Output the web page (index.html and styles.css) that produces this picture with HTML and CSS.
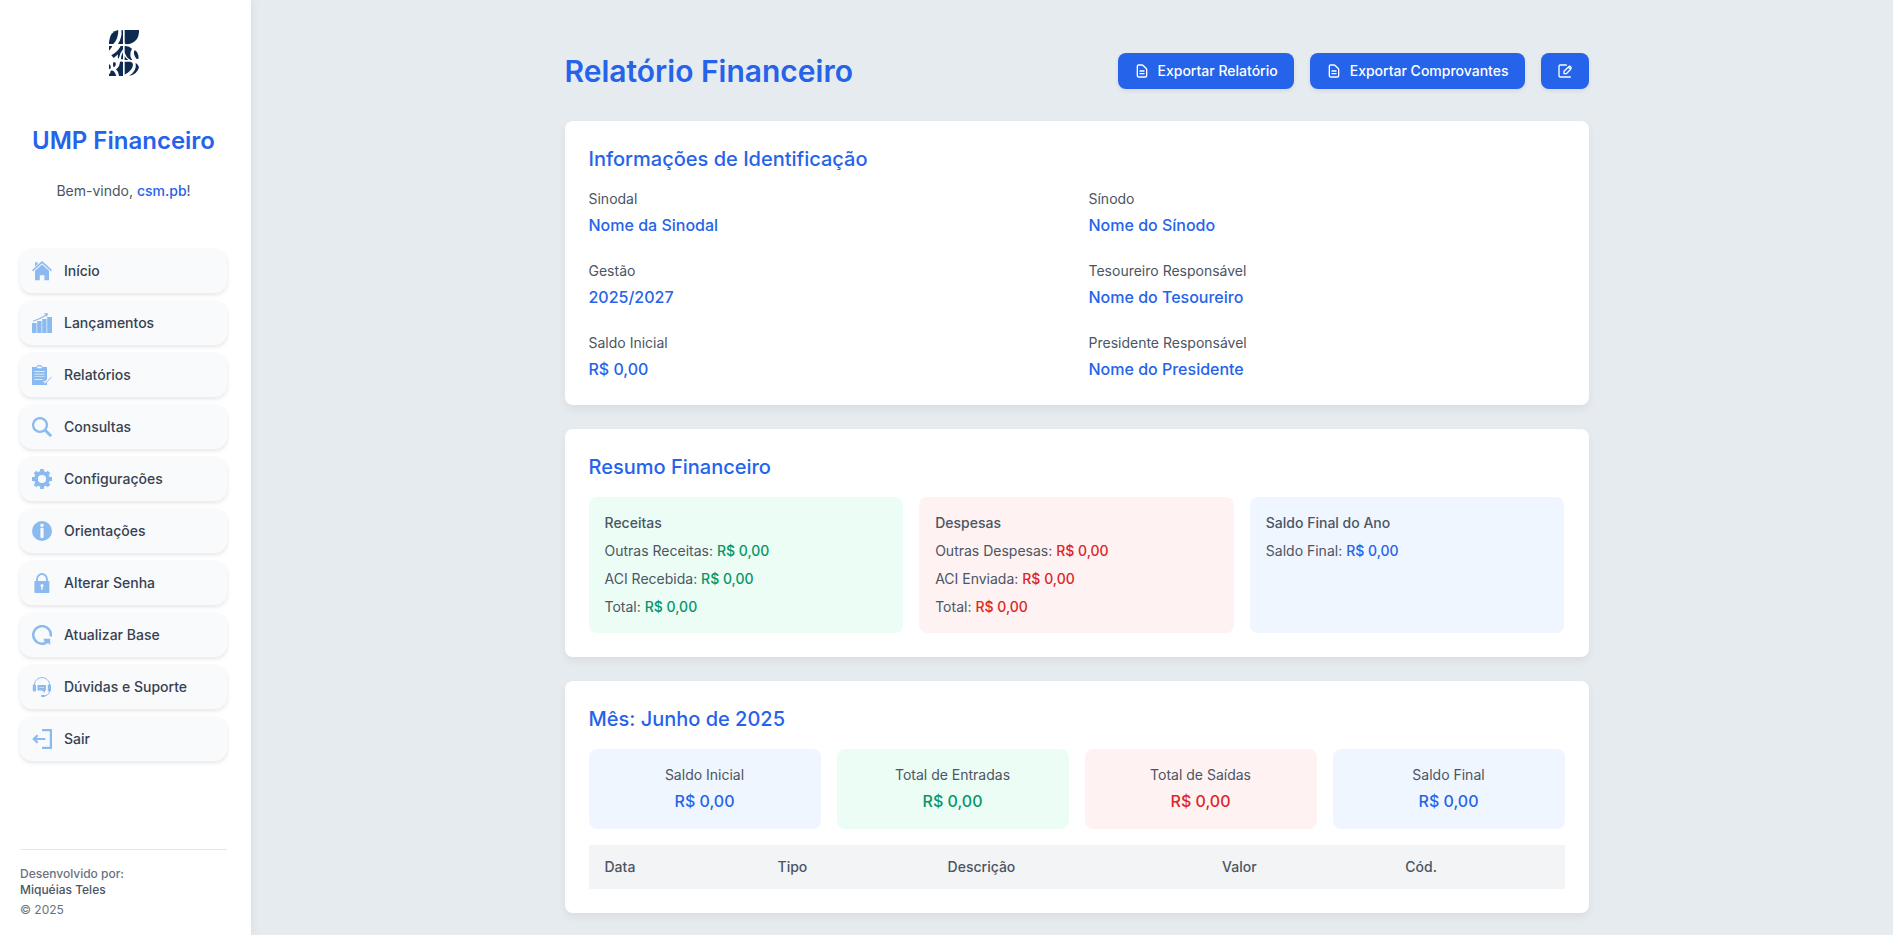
FILE: index.html
```html
<!DOCTYPE html>
<html lang="pt-BR">
<head>
<meta charset="utf-8">
<meta name="viewport" content="width=device-width, initial-scale=1">
<title>UMP Financeiro - Relatório Financeiro</title>
<link rel="stylesheet" href="styles.css">
</head>
<body>
<div class="layout">
  <aside class="sidebar">
    <svg class="logo" viewBox="0 0 90 138" fill="#0f2a50" role="img" aria-label="UMP">
      <path d="M0 42V36Q3 4 28 0Q28 27 13 42Z"/>
      <path d="M37 1H42V42H27Q40 22 37 1Z"/>
      <path d="M47 0H90Q91 40 51 43L47 40Z"/>
      <path d="M0 48H10Q7 56 0 62Z"/>
      <path d="M7 76Q26 66 35 48H42V58Q33 68 29 86Q25 84 27 73Q20 79 14 84Z"/>
      <path d="M42 67V88H36Q36 76 42 67Z"/>
      <path d="M47 48Q60 47 69 56Q63 65 64 77Q65 84 70 90H65Q50 82 47 66Z"/>
      <path d="M47 78Q51 86 58 90H47Z"/>
      <path d="M76 61Q72 75 83 87Q88 88 89 84Q89 75 84 66Q80 61 76 61Z"/>
      <path d="M0 102Q8 107 4 116L0 118Z"/>
      <path d="M5 122Q16 118 22 138H0V133Q5 129 5 122Z"/>
      <path d="M13 97H19Q23 106 15 112Q10 108 13 97Z"/>
      <path d="M33 95Q39 93 42 96V138H30Q30 126 21 118Q32 111 33 95Z"/>
      <path d="M47 95H65Q71 97 72 103Q71 117 58 127Q52 131 47 134Z"/>
      <path d="M80 98Q88 104 90 112Q86 132 60 138Q84 123 80 98Z"/>
    </svg>
    <h2 class="brand">UMP Financeiro</h2>
    <p class="welcome">Bem-vindo, <strong>csm.pb</strong>!</p>
    <nav class="menu" aria-label="Menu principal">
      <a class="menu-item" href="#"><svg class="menu-icon" viewBox="0 0 20 20" fill="currentColor"><path d="M3 1.300h2.600v2L3 5.500z"/><path d="M10 0L20 9l-1 1.200L10 2.200 1 10.200 0 9z"/><path d="M10 3.600L17 9.800V19.200h-4.600v-5H7.800v5H3V9.800z"/></svg><span>Início</span></a>
      <a class="menu-item" href="#"><svg class="menu-icon" viewBox="0 0 20 20" fill="currentColor"><path d="M0 10h4.600v10H0zM5.200 8h4.400v12H5.200zM10.200 6h4.400v14h-4.400zM15.200 4H20v16h-4.800z"/><path d="M1 8.200Q8 6 13.500 2.500" fill="none" stroke="currentColor" stroke-width="1.100"/><path d="M12 .3L16.200.2 14.800 4z"/></svg><span>Lançamentos</span></a>
      <a class="menu-item" href="#"><svg class="menu-icon" viewBox="0 0 20 20" fill="currentColor"><path fill-rule="evenodd" d="M0 2h4l1.500-1.500Q7.500-.8 9.500.5L11 2h4v12.200l-2.200 2.300-1-1-1.200 1L13 19l2-1.500V20H0zM5 2v1.200h5V2Q7.500.4 5 2zM2.300 6v.7h10.400V6zm0 2.700v.7h10.400v-.7zm0 2.700v.7h10.400v-.7zm0 2.700v.7h8v-.7z"/><path d="M11.300 15.800l2 2 5.800-6 .8.800-6.600 6.700-2.800-2.600z" opacity=".65"/></svg><span>Relatórios</span></a>
      <a class="menu-item" href="#"><svg class="menu-icon" viewBox="0 0 20 20" fill="none" stroke="currentColor"><circle cx="8" cy="8" r="6.900" stroke-width="2.300"/><path d="M13.200 13.200l6 6" stroke-width="2.900"/></svg><span>Consultas</span></a>
      <a class="menu-item" href="#"><svg class="menu-icon" viewBox="0 0 20 20"><circle cx="10" cy="10" r="6" fill="none" stroke="currentColor" stroke-width="3.800"/><path d="M10 0v4M10 16v4M0 10h4M16 10h4M3 3l2.800 2.800M14.200 14.200L17 17M3 17l2.800-2.800M14.200 5.800L17 3" stroke="currentColor" stroke-width="3.800"/></svg><span>Configurações</span></a>
      <a class="menu-item" href="#"><svg class="menu-icon" viewBox="0 0 20 20"><circle cx="10" cy="10" r="10" fill="currentColor"/><circle cx="10" cy="4.200" r="1.700" fill="#f9fafb"/><rect x="8.400" y="6.700" width="3.200" height="10.300" rx="1.200" fill="#f9fafb"/></svg><span>Orientações</span></a>
      <a class="menu-item" href="#"><svg class="menu-icon" viewBox="0 0 20 20"><path d="M5 9V6.500a5 5.500 0 0 1 10 0V9" fill="none" stroke="currentColor" stroke-width="1.800"/><rect x="2.400" y="8" width="15" height="12" rx=".8" fill="currentColor"/><circle cx="10" cy="12.400" r="1.500" fill="#f9fafb"/><path d="M9.300 13h1.400v3.700H9.300z" fill="#f9fafb"/></svg><span>Alterar Senha</span></a>
      <a class="menu-item" href="#"><svg class="menu-icon" viewBox="0 0 20 20"><path d="M18.700 11.500A8.800 8.800 0 1 0 13 18.200" fill="none" stroke="currentColor" stroke-width="2.500"/><path d="M11.500 13.700h6.700V20l-2.200-2-2.800 1.500z" fill="currentColor"/></svg><span>Atualizar Base</span></a>
      <a class="menu-item" href="#"><svg class="menu-icon" viewBox="0 0 20 20" fill="currentColor"><path d="M2.200 8C2.800 3.400 6 .6 10 .6S17.200 3.400 17.800 8M18 13.500Q17 18.500 11.500 19.200" fill="none" stroke="currentColor" stroke-width="1"/><rect x=".8" y="7.500" width="3.200" height="7" rx="1"/><rect x="15.800" y="7.500" width="3.200" height="7" rx="1"/><rect x="9" y="18" width="4" height="2" rx=".8"/><path fill-rule="evenodd" d="M5.500 8h8.500v5.500h-1V15.800l-3-2.300H5.500zM7.300 10.400v.7h5v-.7z"/></svg><span>Dúvidas e Suporte</span></a>
      <a class="menu-item" href="#"><svg class="menu-icon" viewBox="0 0 20 20" fill="none" stroke="currentColor" stroke-width="2.200"><path d="M10 1.100h8.900v17.800H10"/><path d="M2 10h11.300M5.600 6.300L1.800 10l3.800 3.700"/></svg><span>Sair</span></a>
    </nav>
    <footer class="credits">
      <p class="credit-label">Desenvolvido por:</p>
      <p class="author">Miquéias Teles</p>
      <p class="copyright">© 2025</p>
    </footer>
  </aside>

  <main class="main">
    <div class="container">
      <header class="page-header">
        <h1>Relatório Financeiro</h1>
        <div class="actions">
          <button class="btn" type="button"><svg class="btn-icon" viewBox="0 0 24 24"><path d="M9 12h6m-6 4h6m2 5H7a2 2 0 01-2-2V5a2 2 0 012-2h5.586a1 1 0 01.707.293l5.414 5.414a1 1 0 01.293.707V19a2 2 0 01-2 2z"/></svg>Exportar Relatório</button>
          <button class="btn" type="button"><svg class="btn-icon" viewBox="0 0 24 24"><path d="M9 12h6m-6 4h6m2 5H7a2 2 0 01-2-2V5a2 2 0 012-2h5.586a1 1 0 01.707.293l5.414 5.414a1 1 0 01.293.707V19a2 2 0 01-2 2z"/></svg>Exportar Comprovantes</button>
          <button class="btn" type="button" aria-label="Editar"><svg class="btn-icon" viewBox="0 0 24 24"><path d="M14 3H5a2 2 0 00-2 2v14a2 2 0 002 2h15M18 7l2.500 2.500L14 16h-3.500v-3.500l7-7a2.100 2.100 0 013 3"/></svg></button>
        </div>
      </header>

      <section class="card">
        <h2>Informações de Identificação</h2>
        <dl class="info-grid">
          <div><dt>Sinodal</dt><dd>Nome da Sinodal</dd></div>
          <div><dt>Sínodo</dt><dd>Nome do Sínodo</dd></div>
          <div><dt>Gestão</dt><dd>2025/2027</dd></div>
          <div><dt>Tesoureiro Responsável</dt><dd>Nome do Tesoureiro</dd></div>
          <div><dt>Saldo Inicial</dt><dd>R$ 0,00</dd></div>
          <div><dt>Presidente Responsável</dt><dd>Nome do Presidente</dd></div>
        </dl>
      </section>

      <section class="card">
        <h2>Resumo Financeiro</h2>
        <div class="summary-grid">
          <div class="box green">
            <h3>Receitas</h3>
            <p>Outras Receitas: <span class="amount">R$ 0,00</span></p>
            <p>ACI Recebida: <span class="amount">R$ 0,00</span></p>
            <p>Total: <span class="amount">R$ 0,00</span></p>
          </div>
          <div class="box red">
            <h3>Despesas</h3>
            <p>Outras Despesas: <span class="amount">R$ 0,00</span></p>
            <p>ACI Enviada: <span class="amount">R$ 0,00</span></p>
            <p>Total: <span class="amount">R$ 0,00</span></p>
          </div>
          <div class="box blue">
            <h3>Saldo Final do Ano</h3>
            <p>Saldo Final: <span class="amount">R$ 0,00</span></p>
          </div>
        </div>
      </section>

      <section class="card">
        <h2>Mês: Junho de 2025</h2>
        <div class="month-grid">
          <div class="stat blue"><p>Saldo Inicial</p><p class="amount">R$ 0,00</p></div>
          <div class="stat green"><p>Total de Entradas</p><p class="amount">R$ 0,00</p></div>
          <div class="stat red"><p>Total de Saídas</p><p class="amount">R$ 0,00</p></div>
          <div class="stat blue"><p>Saldo Final</p><p class="amount">R$ 0,00</p></div>
        </div>
        <table class="entries">
          <thead>
            <tr><th scope="col">Data</th><th scope="col">Tipo</th><th scope="col">Descrição</th><th scope="col">Valor</th><th scope="col">Cód.</th></tr>
          </thead>
        </table>
      </section>
    </div>
  </main>
</div>
</body>
</html>
```
FILE: styles.css
```css
*, *::before, *::after { box-sizing: border-box; }

body, h1, h2, h3, p, dl, dt, dd { margin: 0; }

body {
  background: #e6ebef;
  color: #4b5563;
  font-family: Inter, "Liberation Sans", sans-serif;
  font-size: 14px;
  line-height: 20px;
}

.layout {
  display: flex;
  gap: 9px;
  min-height: 100vh;
}

/* Sidebar */
.sidebar {
  display: flex;
  flex-direction: column;
  flex: none;
  width: 251px;
  padding: 30px 24px 17px 20px;
  background: #fff;
  box-shadow: 2px 0 8px rgba(0, 0, 0, 0.05);
}

.logo {
  align-self: center;
  width: 30px;
  height: 46px;
}

.brand {
  margin-top: 49px;
  color: #2563eb;
  font-size: 24px;
  font-weight: 600;
  line-height: 32px;
  text-align: center;
}

.welcome {
  margin-top: 24px;
  text-align: center;
}

.welcome strong {
  color: #2563eb;
  font-weight: 500;
}

.menu {
  display: flex;
  flex-direction: column;
  gap: 8px;
  margin: 48px 0 24px;
}

.menu-item {
  display: flex;
  align-items: center;
  gap: 12px;
  padding: 12px;
  border-radius: 12px;
  background: #f9fafb;
  box-shadow: 0 2px 4px rgba(0, 0, 0, 0.1);
  color: #374151;
  font-weight: 500;
  text-decoration: none;
}

.menu-icon {
  width: 20px;
  height: 20px;
  color: #8bbaf0;
}

.credits {
  margin-top: auto;
  padding-top: 16px;
  border-top: 1px solid #e5e7eb;
  color: #6b7280;
  font-size: 12px;
  line-height: 16px;
}

.credit-label { font-weight: 500; }

.author {
  color: #4b5563;
  font-weight: 500;
}

.copyright { margin-top: 4px; }

/* Main column */
.main {
  flex: 1;
  min-width: 0;
  padding: 53px 24px 22px;
}

.container {
  display: flex;
  flex-direction: column;
  gap: 24px;
  max-width: 1024px;
  margin: 0 auto;
}

.page-header {
  display: flex;
  align-items: center;
  justify-content: space-between;
  margin-bottom: 8px;
}

.page-header h1 {
  color: #2563eb;
  font-size: 30px;
  font-weight: 600;
  line-height: 36px;
}

.actions {
  display: flex;
  gap: 16px;
}

.btn {
  display: flex;
  align-items: center;
  gap: 8px;
  padding: 8px 16px;
  border: 0;
  border-radius: 8px;
  background: #2563eb;
  box-shadow: 0 2px 4px rgba(0, 0, 0, 0.08);
  color: #fff;
  font: 500 14px/20px Inter, "Liberation Sans", sans-serif;
  cursor: pointer;
}

.btn-icon {
  width: 16px;
  height: 16px;
  fill: none;
  stroke: currentColor;
  stroke-width: 2;
  stroke-linecap: round;
  stroke-linejoin: round;
}

.card {
  padding: 24px;
  border-radius: 8px;
  background: #fff;
  box-shadow: 0 4px 8px rgba(0, 0, 0, 0.06);
}

.card h2 {
  margin-bottom: 16px;
  color: #2563eb;
  font-size: 20px;
  font-weight: 500;
  line-height: 28px;
}

.info-grid {
  display: grid;
  grid-template-columns: repeat(2, 1fr);
  gap: 24px;
}

.info-grid dd {
  margin-top: 4px;
  color: #2563eb;
  font-size: 16px;
  font-weight: 500;
  line-height: 24px;
}

.summary-grid {
  display: grid;
  grid-template-columns: repeat(3, 1fr);
  gap: 16px;
}

.box {
  display: flex;
  flex-direction: column;
  gap: 8px;
  padding: 16px;
  border-radius: 8px;
}

.box h3 {
  font-size: 14px;
  font-weight: 500;
}

.amount { font-weight: 500; }

.green { background: #ecfdf5; }
.green .amount { color: #059669; }
.red { background: #fef2f2; }
.red .amount { color: #dc2626; }
.blue { background: #eff6ff; }
.blue .amount { color: #2563eb; }

.month-grid {
  display: grid;
  grid-template-columns: repeat(4, 1fr);
  gap: 16px;
}

.stat {
  padding: 16px;
  border-radius: 8px;
  text-align: center;
}

.stat .amount {
  margin-top: 4px;
  font-size: 16px;
  line-height: 24px;
}

.entries {
  width: 100%;
  margin-top: 16px;
  border-collapse: collapse;
}

.entries th {
  padding: 12px 16px;
  background: #f3f4f6;
  font-weight: 500;
  text-align: left;
}
```
